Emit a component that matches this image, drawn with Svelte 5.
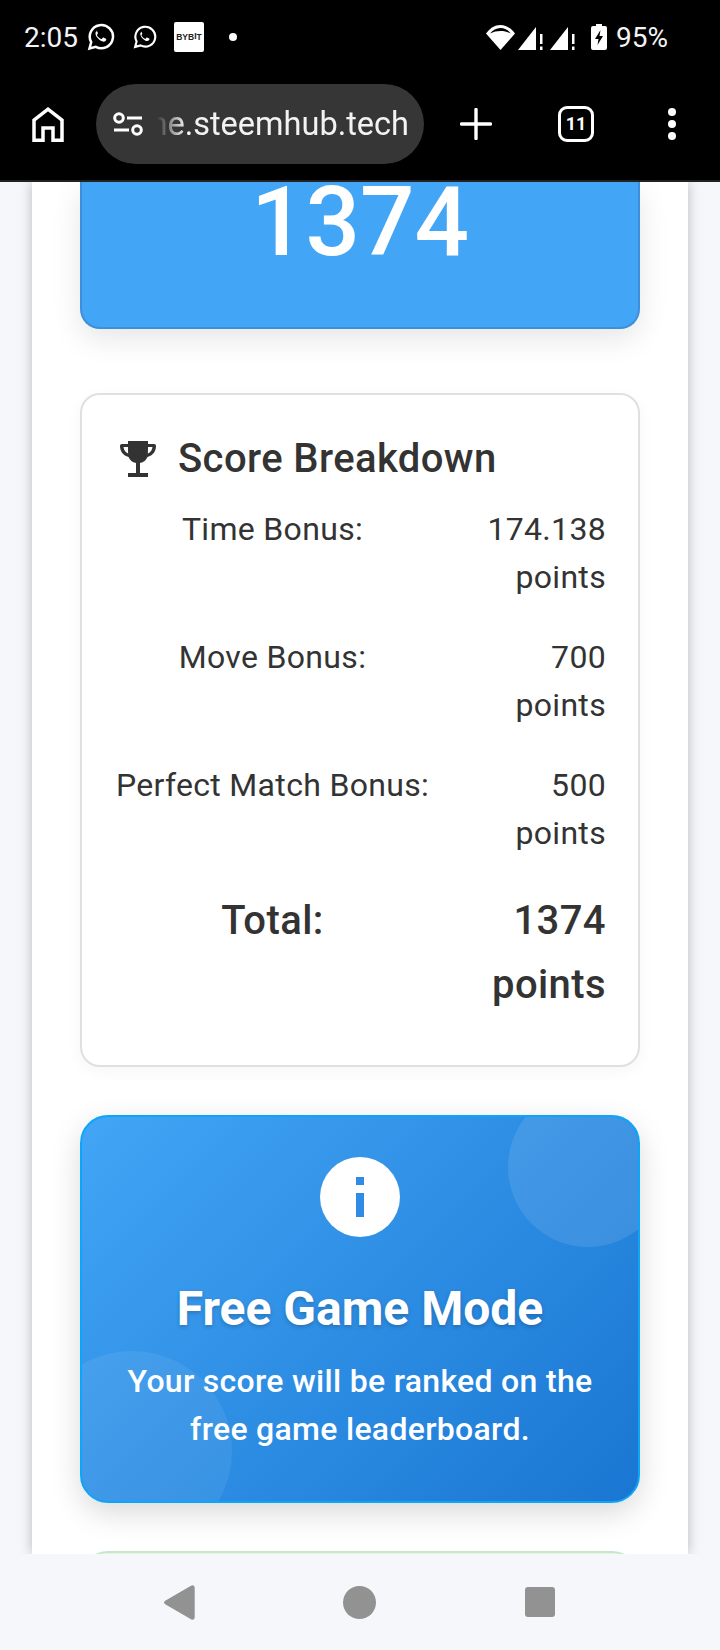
<script>
  const rows = [
    { label: 'Time Bonus:', value: '174.138 points' },
    { label: 'Move Bonus:', value: '700 points' },
    { label: 'Perfect Match Bonus:', value: '500 points' }
  ];
  const waRing = 'M2.500 25.500l1.700-6.300A11.600 11.600 0 1 1 8.800 23.800z';
  const waPhone = 'M10.200 8.200c-.5 0-1.300.4-1.600 1.400-.4 1.300.1 3.300 2 5.500 2 2.300 4.300 3.600 6 3.600 1.200 0 2.300-.9 2.600-2 .1-.5 0-.8-.3-.9l-2.400-1.200c-.4-.2-.6 0-.8.2l-.9 1.100c-.2.2-.4.300-.8.100-1.800-.8-3.100-2.100-4-3.800-.2-.3 0-.5.200-.8l.6-.8c.2-.3.100-.5 0-.8l-1-2.300c-.2-.3-.4-.3-.6-.3z';
</script>

<div class="screen">
  <header class="chrome">
    <div class="status">
      <span class="time">2:05</span>
      <svg class="wa big" viewBox="0 0 28 28"><path class="wa-ring" d={waRing}/><path class="wa-phone" d={waPhone}/></svg>
      <svg class="wa small" viewBox="0 0 28 28"><path class="wa-ring" d={waRing}/><path class="wa-phone" d={waPhone}/></svg>
      <span class="bybit">BYB<i>I</i>T</span>
      <span class="dot"></span>
      <span class="spacer"></span>
      <svg class="wifi" viewBox="0 0 29 25"><path d="M14.500 25 0 8.500C3.800 3.400 8.800 0 14.500 0S25.200 3.400 29 8.500z" fill="#fff"/><path d="M4 8.600C6.800 5.200 10.300 3 14.500 3s7.700 2.200 10.500 5.600C21.600 6.800 18.200 6 14.500 6S7.400 6.800 4 8.600z" fill="#000"/></svg>
      <svg class="signal" viewBox="0 0 25 24"><path d="M0 24 18 1v23z" fill="#fff"/><rect x="22" y="8" width="2.500" height="10" fill="#fff"/><rect x="22" y="20.500" width="2.500" height="3.500" fill="#fff"/></svg>
      <svg class="signal two" viewBox="0 0 25 24"><path d="M0 24 18 1v23z" fill="#fff"/><rect x="22" y="8" width="2.500" height="10" fill="#fff"/><rect x="22" y="20.500" width="2.500" height="3.500" fill="#fff"/></svg>
      <svg class="battery" viewBox="0 0 16 26"><path d="M5 0h6v2h3a2 2 0 0 1 2 2v20a2 2 0 0 1-2 2H2a2 2 0 0 1-2-2V4a2 2 0 0 1 2-2h3z" fill="#fff"/><path d="M9.500 6 4 15h3.500L6.500 21 12 12H8.500z" fill="#000"/></svg>
      <span class="pct">95%</span>
    </div>
    <div class="toolbar">
      <svg class="home" viewBox="0 0 32 35"><path d="M2 33.200V13L16 2.200 30 13v20.200h-9V21H11v12.200z" fill="none" stroke="#fff" stroke-width="3.500"/></svg>
      <div class="omnibox">
        <svg class="tune" viewBox="0 0 30 24"><circle cx="6" cy="6" r="4.300"/><path d="M14 6h15M1 18h15"/><circle cx="24" cy="18" r="4.300"/></svg>
        <div class="url"><span>game.steemhub.tech</span></div>
      </div>
      <svg class="plus" viewBox="0 0 32 32"><path d="M16 1.500v29M1.500 16h29" stroke="#fff" stroke-width="3.400" stroke-linecap="round"/></svg>
      <div class="tabs">11</div>
      <div class="more"><span></span><span></span><span></span></div>
    </div>
  </header>

  <main class="viewport">
    <div class="sheet">
      <section class="score">
        <div class="score-num">1374</div>
      </section>

      <section class="breakdown">
        <h3>
          <svg class="trophy" viewBox="0 0 36 36"><path d="M8 0h20v3h6c1.300 0 2 .7 2 2 0 5.500-3.200 9.500-8.500 11-1.200 3-3.800 5.400-7.500 6v10h8v4H8v-4h8V22c-3.700-.6-6.300-3-7.500-6C3.200 14.500 0 10.500 0 5c0-1.300.7-2 2-2h6zM8 6H3.500c.3 3 2 5.300 4.700 6.500C8 11 8 9 8 6zm20 0c0 3 0 5-.2 6.500 2.700-1.200 4.400-3.500 4.700-6.500z" fill-rule="evenodd"/></svg>
          <span>Score Breakdown</span>
        </h3>
        {#each rows as row}
          <div class="row">
            <div class="label">{row.label}</div>
            <div class="value">{row.value}</div>
          </div>
        {/each}
        <div class="row total">
          <div class="label">Total:</div>
          <div class="value">1374 points</div>
        </div>
      </section>

      <section class="free">
        <span class="blob top"></span>
        <span class="blob bottom"></span>
        <div class="info"><span class="info-i"></span><span class="info-stem"></span></div>
        <h2>Free Game Mode</h2>
        <p>Your score will be ranked on the free game leaderboard.</p>
      </section>

      <section class="next"></section>
    </div>
  </main>

  <nav class="sysnav">
    <svg class="back" viewBox="0 0 31 35"><path d="M27 .8c1.800-1.300 3.700-.3 3.700 1.900v29.600c0 2.200-1.900 3.200-3.700 1.900L1.200 19.200c-1.500-1-1.500-2.400 0-3.400z"/></svg>
    <span class="circle"></span>
    <span class="square"></span>
  </nav>
</div>

<style>
  :global(body) {
    margin: 0;
    background: #f5f7fb;
  }
  .screen {
    width: 720px;
    height: 1650px;
    display: flex;
    flex-direction: column;
    overflow: hidden;
    font-family: Roboto, sans-serif;
    color: #333;
    background: #f5f7fb;
  }
  .chrome {
    height: 182px;
    box-sizing: border-box;
    flex: none;
    background: #000;
    color: #fff;
    border-bottom: 2px solid #222;
  }
  .status {
    height: 74px;
    padding: 0 0 0 24px;
    display: flex;
    align-items: center;
    box-sizing: border-box;
  }
  .time {
    font-size: 28px;
    width: 63px;
    flex: none;
    color: #f4f4f4;
  }
  .wa {
    flex: none;
  }
  .wa-ring {
    fill: none;
    stroke: #fff;
    stroke-width: 2.500;
  }
  .wa-phone {
    fill: #fff;
  }
  .wa.big {
    width: 28px;
    height: 28px;
  }
  .wa.small {
    width: 24px;
    height: 24px;
    margin-left: 18px;
  }
  .bybit {
    width: 30px;
    height: 30px;
    margin-left: 17px;
    background: #fff;
    border-radius: 2px;
    color: #222;
    font-size: 8.500px;
    font-weight: 700;
    text-align: center;
    line-height: 30px;
    font-family: "Liberation Sans", sans-serif;
    flex: none;
  }
  .bybit i {
    font-style: normal;
    position: relative;
    top: -1px;
  }
  .dot {
    width: 8px;
    height: 8px;
    border-radius: 50%;
    background: #fff;
    margin-left: 25px;
    flex: none;
  }
  .spacer {
    flex: 1;
  }
  .wifi {
    width: 29px;
    height: 25px;
    flex: none;
  }
  .signal {
    width: 25px;
    height: 24px;
    margin-left: 3px;
    margin-top: 2px;
    flex: none;
  }
  .signal.two {
    margin-left: 7px;
  }
  .battery {
    width: 16px;
    height: 26px;
    margin-left: 16px;
    flex: none;
  }
  .pct {
    font-size: 28px;
    margin-left: 9px;
    margin-right: 52px;
    color: #f4f4f4;
  }
  .toolbar {
    height: 100px;
    display: flex;
    align-items: center;
    padding: 0 0 0 32px;
    box-sizing: border-box;
  }
  .home {
    width: 32px;
    height: 35px;
    flex: none;
  }
  .omnibox {
    width: 328px;
    height: 80px;
    border-radius: 40px;
    background: #363636;
    margin-left: 32px;
    display: flex;
    align-items: center;
    padding-left: 17px;
    box-sizing: border-box;
    flex: none;
  }
  .tune {
    width: 30px;
    height: 24px;
    flex: none;
    fill: none;
    stroke: #fff;
    stroke-width: 3;
  }
  .url {
    width: 254px;
    margin-left: 12px;
    overflow: hidden;
    white-space: nowrap;
    direction: rtl;
    font-size: 32.500px;
    color: #f2f2f2;
    -webkit-mask-image: linear-gradient(90deg, transparent 2px, #000 30px);
    mask-image: linear-gradient(90deg, transparent 2px, #000 30px);
  }
  .url span {
    direction: ltr;
    unicode-bidi: bidi-override;
  }
  .plus {
    width: 32px;
    height: 32px;
    margin-left: 36px;
    flex: none;
  }
  .tabs {
    width: 36px;
    height: 36px;
    border: 3.500px solid #fff;
    border-radius: 9px;
    box-sizing: border-box;
    margin-left: 66px;
    font-size: 18px;
    font-weight: 700;
    line-height: 29px;
    text-align: center;
    flex: none;
  }
  .more {
    margin-left: 74px;
    display: flex;
    flex-direction: column;
    gap: 4px;
  }
  .more span {
    width: 8px;
    height: 8px;
    border-radius: 50%;
    background: #fff;
  }
  .viewport {
    flex: 1;
    min-height: 0;
    overflow: hidden;
    padding: 0 32px;
  }
  .sheet {
    background: #fff;
    padding: 0 48px;
    height: 100%;
    box-shadow: 0 0 12px rgba(0, 0, 0, 0.25);
  }
  .score {
    height: 147px;
    box-sizing: border-box;
    background: #42a5f5;
    border: 2px solid #3b8fdb;
    border-top: 0;
    border-radius: 0 0 20px 20px;
    box-shadow: 0 10px 30px rgba(0, 0, 0, 0.1);
    text-align: center;
    color: #fff;
  }
  .score-num {
    font-size: 96px;
    font-weight: 500;
    line-height: 76px;
    padding-top: 2px;
  }
  .breakdown {
    margin-top: 64px;
    height: 674px;
    box-sizing: border-box;
    border: 2px solid #e0e0e0;
    border-radius: 20px;
    padding: 32px 32px 0;
    box-shadow: 0 4px 16px rgba(0, 0, 0, 0.04);
    background: #fff;
  }
  h3 {
    margin: 0 0 14px;
    font-size: 40px;
    font-weight: 500;
    letter-spacing: 0.01em;
    line-height: 64px;
    display: flex;
    align-items: center;
    gap: 22px;
    color: #333;
  }
  .trophy {
    width: 36px;
    height: 36px;
    margin-left: 6px;
    fill: #333;
    flex: none;
  }
  .row {
    display: grid;
    grid-template-columns: 317px 130px;
    justify-content: space-between;
    font-size: 32px;
    line-height: 48px;
    margin-bottom: 32px;
    color: #333;
    letter-spacing: 0.01em;
  }
  .label {
    text-align: center;
  }
  .value {
    text-align: right;
  }
  .total {
    font-size: 40px;
    font-weight: 500;
    line-height: 64px;
    margin-bottom: 0;
  }
  .free {
    position: relative;
    overflow: hidden;
    margin-top: 48px;
    height: 388px;
    box-sizing: border-box;
    border: 2px solid #0da5f5;
    border-radius: 28px;
    background: linear-gradient(135deg, #42a5f5, #1976d2);
    box-shadow: 0 10px 30px rgba(0, 0, 0, 0.15);
    color: #fff;
    text-align: center;
    padding-top: 40px;
  }
  .blob {
    position: absolute;
    border-radius: 50%;
  }
  .blob.top {
    width: 160px;
    height: 160px;
    top: -30px;
    right: -30px;
    background: rgba(255, 255, 255, 0.1);
  }
  .blob.bottom {
    width: 200px;
    height: 200px;
    bottom: -50px;
    left: -50px;
    background: rgba(255, 255, 255, 0.07);
  }
  .info {
    position: relative;
    width: 80px;
    height: 80px;
    margin: 0 auto;
    border-radius: 50%;
    background: #fff;
  }
  .info-i, .info-stem {
    position: absolute;
    left: 36px;
    width: 8px;
    background: #2f8be6;
  }
  .info-i {
    top: 20px;
    height: 8px;
  }
  .info-stem {
    top: 36px;
    height: 24px;
  }
  h2 {
    margin: 40px 0 0;
    font-size: 48px;
    font-weight: 700;
    line-height: 64px;
    text-shadow: 0 2px 4px rgba(0, 0, 0, 0.2);
    position: relative;
  }
  p {
    margin: 16px 16px 0;
    padding: 0 20px;
    font-size: 32px;
    letter-spacing: 0.3px;
    font-weight: 500;
    line-height: 48px;
    position: relative;
  }
  .next {
    margin-top: 48px;
    height: 40px;
    background: #e8f5e9;
    border: 2px solid #c8e6c9;
    border-radius: 28px 28px 0 0;
  }
  .sysnav {
    height: 96px;
    flex: none;
    background: #f5f7fb;
    position: relative;
    z-index: 2;
    display: flex;
    align-items: center;
  }
  .back {
    width: 31px;
    height: 35px;
    margin-left: 164px;
    fill: #929292;
    flex: none;
  }
  .circle {
    width: 33px;
    height: 33px;
    border-radius: 50%;
    background: #929292;
    margin-left: 148px;
    flex: none;
  }
  .square {
    width: 30px;
    height: 30px;
    border-radius: 3px;
    background: #929292;
    margin-left: 149px;
    flex: none;
  }
</style>
